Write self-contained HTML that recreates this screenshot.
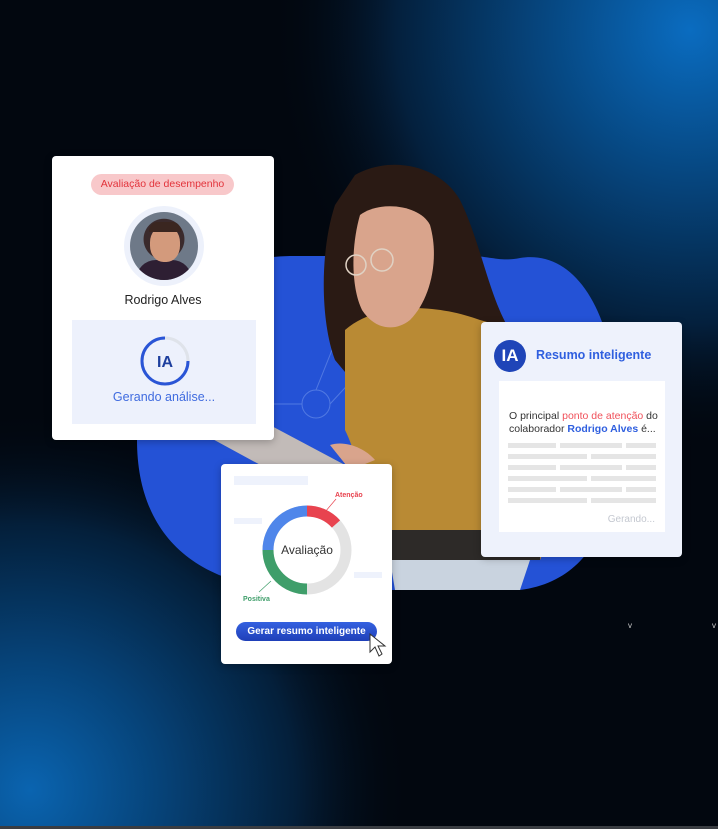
<!DOCTYPE html>
<html><head><meta charset="utf-8"><style>
*{margin:0;padding:0;box-sizing:border-box}
body{width:718px;height:829px;overflow:hidden;position:relative;font-family:"Liberation Sans",Arial,sans-serif;background:#02070f}
.card{position:absolute;background:#fff;border-radius:4px;box-shadow:0 2px 8px rgba(0,0,0,.25)}
.abs{position:absolute}
</style></head><body>
<svg class="abs" style="left:0;top:0" width="718" height="829">
<defs>
<radialGradient id="g1" cx="690" cy="30" r="420" gradientUnits="userSpaceOnUse">
<stop offset="0" stop-color="#0a6cc0"/><stop offset=".35" stop-color="#06467f"/><stop offset=".7" stop-color="#04203d"/><stop offset="1" stop-color="#02070f" stop-opacity="0"/></radialGradient>
<radialGradient id="g2" cx="30" cy="790" r="380" gradientUnits="userSpaceOnUse">
<stop offset="0" stop-color="#0a64b0"/><stop offset=".35" stop-color="#064277"/><stop offset=".7" stop-color="#041f3a"/><stop offset="1" stop-color="#02070f" stop-opacity="0"/></radialGradient>
</defs>
<rect width="718" height="829" fill="#02070f"/>
<rect width="718" height="829" fill="url(#g1)"/>
<rect width="718" height="829" fill="url(#g2)"/>
<path d="M137 440 C137 320 190 258 290 256 L470 256 C490 256 500 262 520 258 C570 250 610 300 618 400 C625 500 600 580 520 590 L300 590 C190 588 137 530 137 440Z" fill="#2452d6"/>
<g stroke="#6f93ea" stroke-width="1" fill="none" opacity=".6">
<circle cx="316" cy="404" r="14"/><circle cx="420" cy="316" r="5"/><circle cx="370" cy="437" r="5"/>
<path d="M230 404 H302 M330 404 L380 350 M316 390 L340 330 M400 460 H480 M330 480 L420 480 L470 530"/>
</g>
<!-- woman -->
<path d="M355 175 C390 155 440 165 460 200 C480 240 490 300 510 330 L520 380 L470 360 L400 330 L360 390 L335 360 C320 320 320 250 335 205Z" fill="#2a1a14"/>
<path d="M345 330 C380 300 440 305 480 320 C520 330 545 360 550 420 C555 480 550 540 540 560 L390 560 C370 520 360 460 345 430Z" fill="#b98a34"/>
<path d="M360 215 C380 200 420 205 430 225 C440 260 430 300 410 320 C395 332 375 330 362 310 C352 290 350 250 360 215Z" fill="#d9a48c"/>
<path d="M385 530 H540 V560 H385Z" fill="#2d2a28"/>
<path d="M390 560 H530 L520 590 H395Z" fill="#c9d3df"/>
<circle cx="356" cy="265" r="10" fill="none" stroke="#e0d2c4" stroke-width="1.5"/>
<circle cx="382" cy="260" r="11" fill="none" stroke="#e0d2c4" stroke-width="1.5"/>
<path d="M196 430 L232 405 L345 465 L310 492Z" fill="#c2bbb8"/>
<path d="M330 445 C345 440 365 448 375 460 L350 470Z" fill="#d9a48c"/>
<text x="628" y="628" fill="#ccc" font-size="8">v</text><text x="712" y="628" fill="#ccc" font-size="8">v</text>
<rect x="0" y="826" width="718" height="3" fill="#3a3d42"/>
</svg>

<!-- card 1 -->
<div class="card" style="left:52px;top:156px;width:222px;height:284px">
  <div class="abs" style="left:39px;top:18px;width:143px;height:21px;background:#f8c8ca;border-radius:11px;color:#e2333b;font-size:10.5px;text-align:center;line-height:21px">Avaliação de desempenho</div>
  <div class="abs" style="left:72px;top:50px;width:80px;height:80px;border-radius:50%;background:#edf1fb"></div>
  <div class="abs" style="left:78px;top:56px;width:68px;height:68px;border-radius:50%;background:radial-gradient(circle at 50% 40%,#d9a080 0 20%,#3a2a2c 21% 38%,#6e7988 39% 100%);overflow:hidden">
    <div class="abs" style="left:6px;top:48px;width:56px;height:30px;background:#2e1f33;border-radius:20px 20px 0 0"></div>
    <div class="abs" style="left:20px;top:14px;width:30px;height:36px;background:#d39a7c;border-radius:45%"></div>
    <div class="abs" style="left:19px;top:10px;width:32px;height:10px;background:#3a2620;border-radius:14px 14px 2px 2px"></div>
  </div>
  <div class="abs" style="left:0;top:137px;width:222px;text-align:center;font-size:12.5px;color:#222">Rodrigo Alves</div>
  <div class="abs" style="left:20px;top:164px;width:184px;height:104px;background:#edf1fc"></div>
  <svg class="abs" style="left:88px;top:180px" width="50" height="50"><circle cx="25" cy="25" r="23" fill="none" stroke="#dfe3ea" stroke-width="3"/><path d="M25 2 A23 23 0 1 0 48 25" fill="none" stroke="#2a55d6" stroke-width="3"/><text x="25" y="31" text-anchor="middle" font-size="16" font-weight="bold" fill="#1e3f9e" font-family="Liberation Sans">IA</text></svg>
  <div class="abs" style="left:20px;top:234px;width:184px;text-align:center;font-size:12.5px;color:#3f6bdf">Gerando análise...</div>
</div>

<!-- card 2 -->
<div class="card" style="left:221px;top:464px;width:171px;height:200px">
  <div class="abs" style="left:13px;top:12px;width:74px;height:9px;background:#eef2fc"></div>
  <div class="abs" style="left:13px;top:54px;width:28px;height:6px;background:#eef2fc"></div>
  <div class="abs" style="left:133px;top:108px;width:28px;height:6px;background:#eef2fc"></div>
  <svg class="abs" style="left:0;top:0" width="171" height="200">
    <g transform="translate(86,86)" fill="none" stroke-width="11">
      <circle r="39" stroke="#e3e3e3"/>
      <path d="M0 -39 A39 39 0 0 1 29 -26" stroke="#e8434f"/>
      <path d="M-39 0 A39 39 0 0 1 0 -39" stroke="#4f86ea"/>
      <path d="M0 39 A39 39 0 0 1 -39 0" stroke="#3f9e6a"/>
    </g>
    <line x1="104" y1="48" x2="115" y2="35" stroke="#e8434f" stroke-width=".7"/>
    <line x1="38" y1="128" x2="50" y2="117" stroke="#3f9e6a" stroke-width=".7"/>
    <text x="86" y="90" text-anchor="middle" font-size="12" fill="#333" font-family="Liberation Sans">Avaliação</text>
    <text x="114" y="33" font-size="7" font-weight="bold" fill="#e8434f" font-family="Liberation Sans">Atenção</text>
    <text x="22" y="137" font-size="7" font-weight="bold" fill="#3f9e6a" font-family="Liberation Sans">Positiva</text>
  </svg>
  <div class="abs" style="left:15px;top:158px;width:141px;height:19px;border-radius:10px;background:linear-gradient(#3461e0,#1f3fb8);color:#fff;font-size:10px;font-weight:bold;text-align:center;line-height:19px">Gerar resumo inteligente</div>
  <svg class="abs" style="left:147px;top:168px" width="24" height="28"><path d="M2 2 L2 20 L7 15 L11 24 L14 22 L10 14 L17 14Z" fill="#fff" stroke="#333" stroke-width="1"/></svg>
</div>

<!-- card 3 -->
<div class="card" style="left:481px;top:322px;width:201px;height:235px;background:#eef2fc">
  <div class="abs" style="left:13px;top:18px;width:32px;height:32px;border-radius:50%;background:#1f45b8;color:#fff;font-weight:bold;font-size:17px;text-align:center;line-height:32px">IA</div>
  <div class="abs" style="left:55px;top:26px;font-size:12.5px;font-weight:bold;color:#2f5fdf">Resumo inteligente</div>
  <div class="abs" style="left:18px;top:59px;width:166px;height:151px;background:#fff">
    <div class="abs" style="left:10px;top:29px;font-size:10.5px;line-height:13px;color:#333;width:156px">O principal <span style="color:#f0505a">ponto de atenção</span> do colaborador <b style="color:#2f5fdf">Rodrigo Alves</b> é...</div>
    <svg class="abs" style="left:9px;top:62px" width="150" height="60" fill="#e5e5e5">
      <rect x="0" y="0" width="48" height="5"/><rect x="52" y="0" width="62" height="5"/><rect x="118" y="0" width="30" height="5"/>
      <rect x="0" y="11" width="79" height="5"/><rect x="83" y="11" width="65" height="5"/>
      <rect x="0" y="22" width="48" height="5"/><rect x="52" y="22" width="62" height="5"/><rect x="118" y="22" width="30" height="5"/>
      <rect x="0" y="33" width="79" height="5"/><rect x="83" y="33" width="65" height="5"/>
      <rect x="0" y="44" width="48" height="5"/><rect x="52" y="44" width="62" height="5"/><rect x="118" y="44" width="30" height="5"/>
      <rect x="0" y="55" width="79" height="5"/><rect x="83" y="55" width="65" height="5"/>
    </svg>
    <div class="abs" style="right:10px;top:133px;font-size:10px;color:#c4c8d0">Gerando...</div>
  </div>
</div>
</body></html>
